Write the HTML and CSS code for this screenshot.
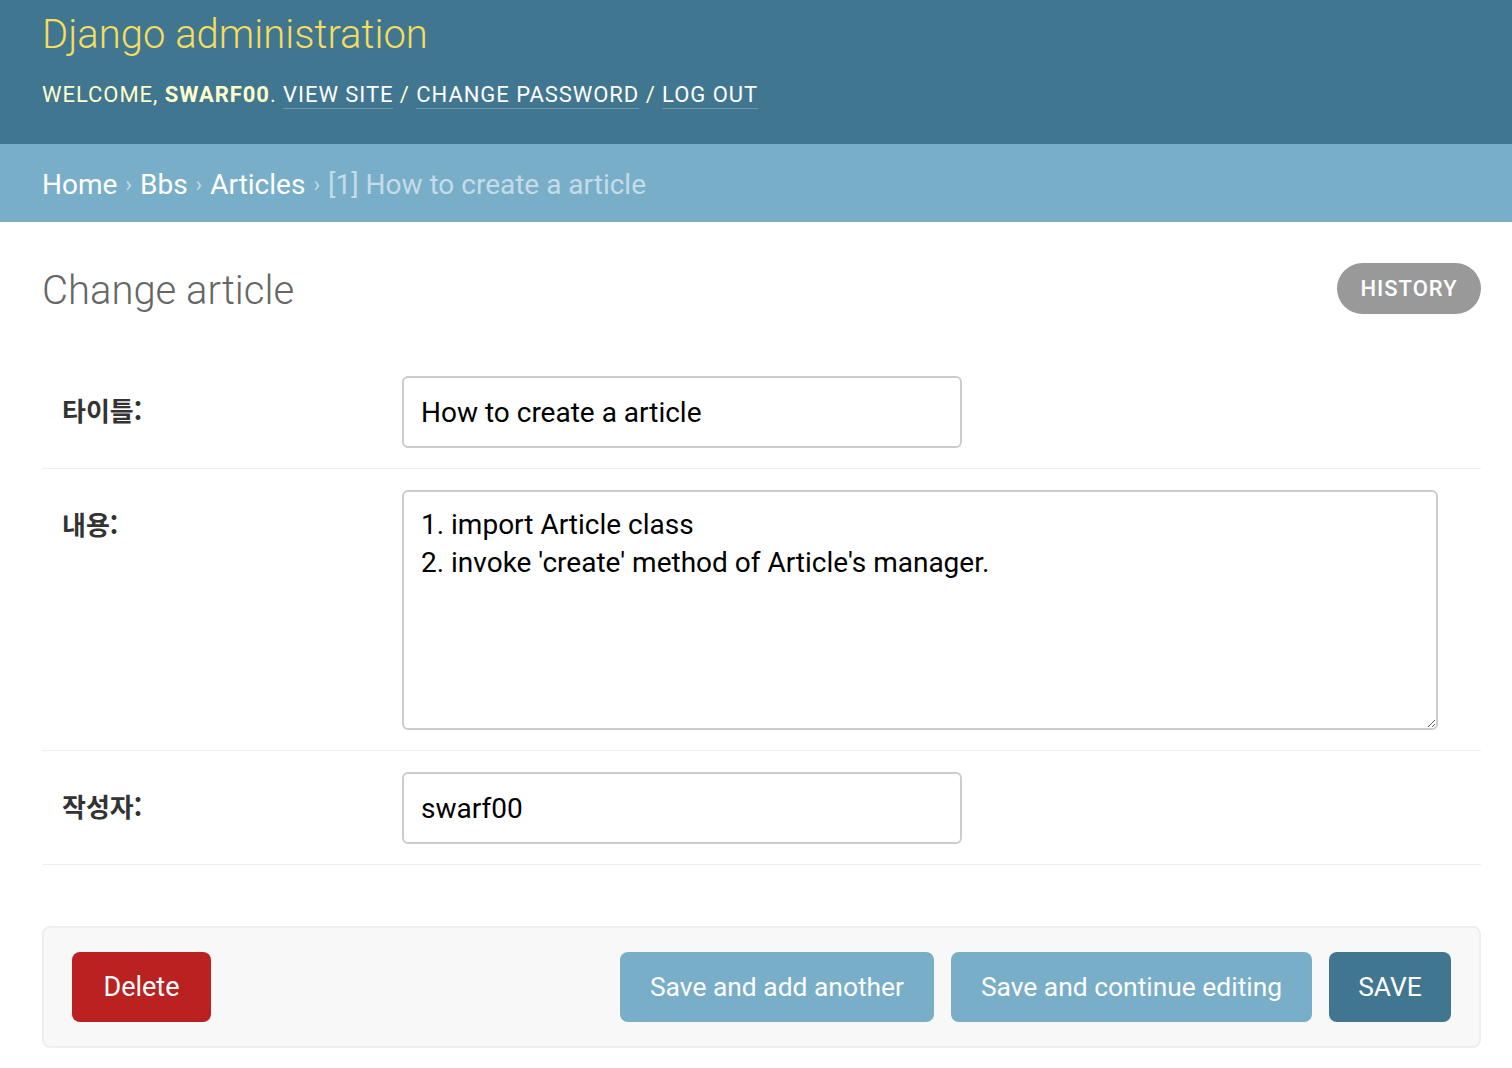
FILE: index.html
```html
<!DOCTYPE html>
<html lang="ko">
<head>
<meta charset="utf-8">
<title>Change article | Django site admin</title>
<link rel="stylesheet" href="styles.css">
</head>
<body>
<header class="header">
  <h1 class="site-name">Django administration</h1>
  <div class="user-tools">
    WELCOME, <strong>SWARF00</strong>.
    <a href="#" class="ut-link">VIEW SITE</a> /
    <a href="#" class="ut-link">CHANGE PASSWORD</a> /
    <a href="#" class="ut-link">LOG OUT</a>
  </div>
</header>
<nav class="breadcrumbs">
  <a href="#">Home</a><span class="sep">›</span><a href="#">Bbs</a><span class="sep">›</span><a href="#">Articles</a><span class="sep">›</span><span class="current">[1] How to create a article</span>
</nav>
<main class="content">
  <div class="title-row">
    <h1 class="page-title">Change article</h1>
    <a href="#" class="history">HISTORY</a>
  </div>
  <form class="form">
    <div class="form-row">
      <label class="label">타이틀:</label>
      <input class="text-input" type="text" value="How to create a article">
    </div>
    <div class="form-row form-row-shift">
      <label class="label">내용:</label>
      <textarea class="textarea">1. import Article class
2. invoke 'create' method of Article's manager.</textarea>
    </div>
    <div class="form-row form-row-shift">
      <label class="label">작성자:</label>
      <input class="text-input" type="text" value="swarf00">
    </div>
    <div class="submit-row">
      <a href="#" class="btn btn-delete">Delete</a>
      <div class="spacer"></div>
      <button type="button" class="btn btn-light">Save and add another</button>
      <button type="button" class="btn btn-light">Save and continue editing</button>
      <button type="button" class="btn btn-dark">SAVE</button>
    </div>
  </form>
</main>
</body>
</html>
```

FILE: styles.css
```css
* { box-sizing: border-box; }
html, body { margin: 0; padding: 0; }
body {
  font-family: Roboto, "Noto Sans CJK KR", sans-serif;
  background: #fff;
  color: #333;
  width: 1512px;
}
a { text-decoration: none; }

.header {
  background: #417690;
  height: 144px;
  padding: 9px 42px 0;
}
.site-name {
  margin: 0;
  font-weight: 300;
  font-size: 40px;
  line-height: 52px;
  color: #f5dd5d;
}
.user-tools {
  margin-top: 19px;
  font-size: 22px;
  line-height: 30px;
  letter-spacing: 0.95px;
  color: #ffc;
}
.user-tools strong { font-weight: 700; }
.ut-link {
  color: #fff;
  border-bottom: 1px solid rgba(255,255,255,0.25);
  padding-bottom: 1px;
}

.breadcrumbs {
  background: #79aec8;
  height: 78px;
  padding: 2px 42px 0;
  display: flex;
  align-items: center;
  font-size: 28px;
  color: #c4dce8;
}
.breadcrumbs a { color: #fff; }
.breadcrumbs .sep { font-size: 22px; margin: 0 8px; color: #c4dce8; }
.breadcrumbs .current { color: #c4dce8; }

.content {
  padding: 0 31px 0 42px;
}
.title-row {
  display: flex;
  align-items: center;
  justify-content: space-between;
  height: 134px;
}
.page-title {
  margin: 0;
  font-weight: 300;
  font-size: 40px;
  color: #666;
  position: relative;
  top: 1px;
}
.history {
  background: #999;
  color: #fff;
  font-size: 22px;
  font-weight: 500;
  letter-spacing: 1px;
  height: 51px;
  width: 144px;
  border-radius: 26px;
  display: flex;
  align-items: center;
  justify-content: center;
  position: relative;
  top: -1px;
}

.form-row {
  display: flex;
  align-items: flex-start;
  padding: 20px;
  border-bottom: 1px solid #eee;
}
.form-row-shift { padding-top: 21px; }
.label {
  width: 340px;
  flex: none;
  font-family: "Noto Sans CJK KR", Roboto, sans-serif;
  font-weight: 700;
  font-size: 26px;
  line-height: 34px;
  color: #333;
  padding-top: 17px;
}
.text-input {
  width: 560px;
  height: 72px;
  border: 2px solid #ccc;
  border-radius: 6px;
  padding: 0 17px;
  font-family: Roboto, sans-serif;
  font-size: 28px;
  color: #000;
  background: #fff;
}
.textarea {
  width: 1036px;
  height: 240px;
  border: 2px solid #ccc;
  border-radius: 6px;
  padding: 14px 17px;
  font-family: Roboto, sans-serif;
  font-size: 28px;
  line-height: 38px;
  color: #000;
  resize: vertical;
}

.submit-row {
  margin-top: 61px;
  display: flex;
  align-items: center;
  gap: 17px;
  background: #f8f8f8;
  border: 2px solid #eee;
  border-radius: 8px;
  padding: 24px 28px;
  height: 122px;
}
.spacer { flex: 1; }
.btn {
  height: 70px;
  border: none;
  border-radius: 8px;
  font-family: Roboto, sans-serif;
  font-size: 26.4px;
  color: #fff;
  display: flex;
  align-items: center;
  justify-content: center;
  padding: 0;
}
.btn-delete { background: #ba2121; width: 139px; font-size: 27px; }
.btn-light { background: #79aec8; }
.btn-light:nth-of-type(1) { width: 314px; }
.btn-light:nth-of-type(2) { width: 361px; }
.btn-dark { background: #417690; width: 122px; }
```
